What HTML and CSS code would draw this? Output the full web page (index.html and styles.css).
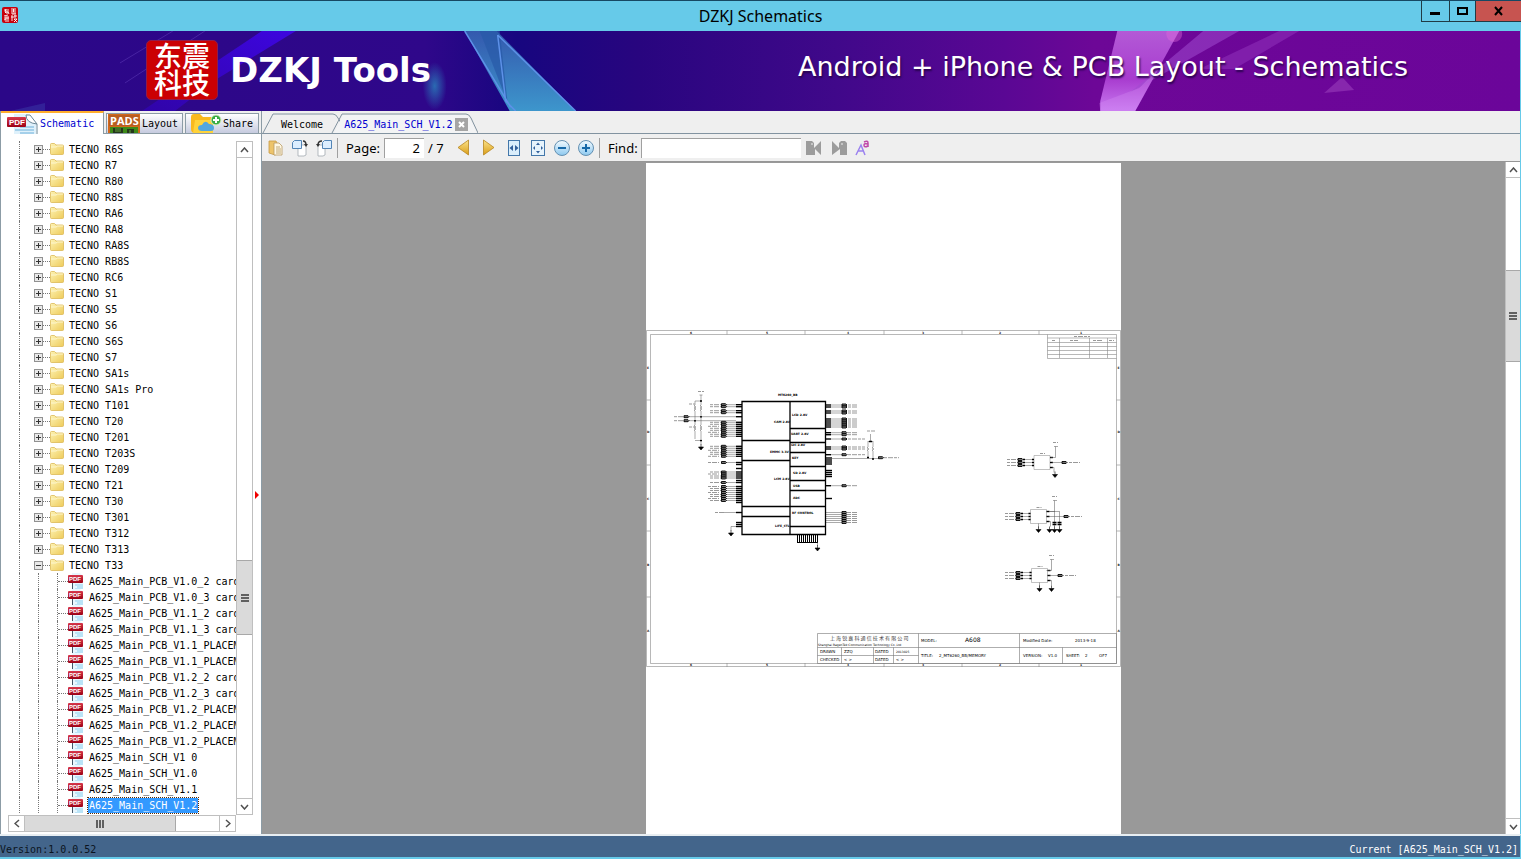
FILE: index.html
```html
<!DOCTYPE html>
<html lang="en">
<head>
<meta charset="utf-8">
<title>DZKJ Schematics</title>
<link rel="stylesheet" href="styles.css">
</head>
<body>
<svg class="defs" aria-hidden="true">
  <defs>
    <linearGradient id="gFolder" x1="0" y1="0" x2="1" y2="1"><stop offset="0" stop-color="#fdf3b4"/><stop offset="1" stop-color="#eecb5a"/></linearGradient>
    <linearGradient id="gRed" x1="0" y1="0" x2="0" y2="1"><stop offset="0" stop-color="#d8384c"/><stop offset="1" stop-color="#9c0014"/></linearGradient>
    <linearGradient id="gGold" x1="0" y1="0" x2="0" y2="1"><stop offset="0" stop-color="#fbe38a"/><stop offset="1" stop-color="#d99d17"/></linearGradient>
    <linearGradient id="gSky" x1="0" y1="0" x2="0" y2="1"><stop offset="0" stop-color="#f4fbff"/><stop offset="1" stop-color="#8cc8ef"/></linearGradient>
    <symbol id="folder" viewBox="0 0 14 13"><path d="M.5 1.500q0-1 1-1h3l1.500 1.500h6.500q1 0 1 1v7.500q0 1-1 1h-11q-1 0-1-1z" fill="url(#gFolder)" stroke="#dcb957" stroke-width=".8"/><path d="M1 4h5l1.500-1H13" fill="none" stroke="#fffbe0" stroke-width=".8"/></symbol>
    <symbol id="pdf" viewBox="0 0 16 16"><path d="M4 0h8l3 3v13H4z" fill="#e8f6fd"/><path d="M4.500 9v7" stroke="#456"/><path d="M7 12h8M9 14h6M7 16h8" stroke="#8cd0f0" fill="none"/><rect x="0" y="2" width="15" height="8" rx="1" fill="url(#gRed)"/><text x="1" y="8" class="pdf-text">PDF</text></symbol>
  </defs>
</svg>

<header class="titlebar">
  <svg class="app-icon" viewBox="0 0 16 16"><rect width="16" height="16" rx="2" fill="#c8000c"/><path d="M2 3h5M4 2L3 5h4M5 4v3M3 6l1-1M6 5l1 2M9 2h5M9 4h5M11.500 2v3M9 6h5M10 7h4M2 9l4-1M4 9v6M2 11h5M2 13l2-1M6 9v6M9 10h3M10 8v6M12 9h3M13 8v3M12 12h3l-3 3M12 12l3 3" stroke="#fff" stroke-width=".9" fill="none"/></svg>
  <h1 class="title">DZKJ Schematics</h1>
  <div class="win-buttons">
    <button class="win-btn" aria-label="Minimize"><svg width="27" height="20"><path d="M8 12.500h10" stroke="#000" stroke-width="3"/></svg></button>
    <button class="win-btn win-max" aria-label="Maximize"><svg width="25" height="20"><rect x="8" y="7" width="9" height="6" fill="none" stroke="#000" stroke-width="2"/></svg></button>
    <button class="win-btn win-close" aria-label="Close"><svg width="45" height="20"><path d="M19 6l7 8M26 6l-7 8" stroke="#000" stroke-width="2"/></svg></button>
  </div>
</header>

<div class="banner">
  <svg class="banner-art" viewBox="0 0 1521 80" preserveAspectRatio="none" aria-hidden="true">
    <defs>
      <linearGradient id="b0"><stop offset="0" stop-color="#2b0788"/><stop offset=".28" stop-color="#2f078a"/><stop offset=".34" stop-color="#17067f"/><stop offset=".42" stop-color="#28057f"/><stop offset=".55" stop-color="#40088a"/><stop offset=".66" stop-color="#5a0794"/><stop offset=".72" stop-color="#6d0797"/><stop offset="1" stop-color="#6b059a"/></linearGradient>
      <linearGradient id="b1" x1="0" y1="0" x2="0" y2="1"><stop offset="0" stop-color="#3459ae"/><stop offset="1" stop-color="#3d96cc"/></linearGradient>
      <linearGradient id="b2" x1="0" y1="1" x2="1" y2="0"><stop offset="0" stop-color="#3004a8"/><stop offset="1" stop-color="#3d06df"/></linearGradient>
      <linearGradient id="b3" x1="0" y1="0" x2="0" y2="1"><stop offset="0" stop-color="#b35ad6"/><stop offset=".6" stop-color="#a83ccf"/><stop offset="1" stop-color="#c878f0"/></linearGradient>
      <radialGradient id="b4"><stop offset="0" stop-color="#2a83bd" stop-opacity=".8"/><stop offset="1" stop-color="#2a83bd" stop-opacity="0"/></radialGradient>
    </defs>
    <rect width="1521" height="80" fill="url(#b0)"/>
    <path d="M262 0h34L217 48 175 80H142z" fill="url(#b2)"/>
    <path d="M205 0L125 52M173 0L120 32" stroke="#5430ae" stroke-width="1" opacity=".7"/>
    <path d="M10 80l35-8 0 8z" fill="#3a3aa8" opacity=".5"/>
    <ellipse cx="435" cy="55" rx="12" ry="24" fill="url(#b4)"/>
    <path d="M465 0h32l79 80h-66z" fill="url(#b1)"/>
    <path d="M480 0h20l8 72z" fill="#285aa8" opacity=".7"/>
    <path d="M465 0l46 76M498 4l78 76M498 4l8 66 10 10" stroke="#5d91e8" stroke-width="1.500" fill="none"/>
    <path d="M1118 0h62l-44 80h-35v-10z" fill="url(#b3)"/>
    <path d="M1204 0h36l-110 62z" fill="#a04bd0" opacity=".55"/>
    <path d="M1280 0h20l-65 38h-35z" fill="#9336bd" opacity=".5"/>
    <path d="M1100 72l40-15 20-20-24 43h-35z" fill="#d792f4" opacity=".3"/>
    <path d="M1325 62l18-16 12 13z" fill="#8727ad"/>
    <circle cx="1175" cy="3" r="8" fill="#e06bda" opacity=".4"/>
  </svg>
  <div class="logo">东震<br>科技</div>
  <strong class="brand">DZKJ Tools</strong>
  <span class="slogan">Android + iPhone &amp; PCB Layout - Schematics</span>
</div>

<main class="main">
  <aside class="side">
    <div class="side-tabs" role="tablist">
      <button class="side-tab active" role="tab"><svg width="34" height="20" viewBox="0 0 34 20"><path d="M8 0h14l8 8v12H8z" fill="#dff1fb"/><path d="M20 1q0 8 11 9L24 1z" fill="#fff" stroke="#6a8796"/><path d="M31 10v10" stroke="#6a8796"/><path d="M14 13h14M9 16h19M14 19h14" stroke="#a5d0ea" stroke-width="2"/><rect x="1" y="3" width="19" height="10" rx="1" fill="url(#gRed)"/><text x="3" y="11" class="tab-pdf-text">PDF</text></svg>Schematic</button>
      <button class="side-tab tab-layout" role="tab"><svg width="32" height="19" viewBox="0 0 32 19"><rect width="32" height="19" fill="#d2691b"/><rect x="1" y="1" width="30" height="11" fill="#b95d20"/><path d="M2 13h28v6H2z" fill="#3d8a18"/><path d="M5 14h10v5H5zM19 15h7v4h-7z" fill="#24371b"/><path d="M7 15h6M7 17h6M22 16v3" stroke="#63a33a"/><text x="2" y="11" class="pads-text">PADS</text></svg>Layout</button>
      <button class="side-tab tab-share" role="tab"><svg width="34" height="19" viewBox="0 0 34 19"><path d="M2 3q0-3 3-3h6l3 3h9v16H6q-4 0-4-4z" fill="#f8b91e"/><path d="M6 6h18v13H4z" fill="#ffd33a"/><path d="M13 17q-4 0-4-3t4-3q3-6 7-1 5 0 5 4 0 3-3 3z" fill="#52a7df"/><circle cx="27" cy="6" r="5" fill="#38ac43" stroke="#d7eec4"/><path d="M24 6h6M27 3v6" stroke="#fff" stroke-width="2"/></svg>Share</button>
    </div>
    <div class="side-body">
      <div class="tree-row">
        <div class="tree" id="tree" role="tree"></div>
        <div class="vscroll">
          <button aria-label="Scroll up"><svg width="9" height="6"><path d="M1 5l3.500-4L8 5" class="arrow"/></svg></button>
          <div class="track"><div class="space-tree"></div><div class="thumb thumb-tree"><i></i><i></i><i></i></div></div>
          <button aria-label="Scroll down"><svg width="9" height="6"><path d="M1 1l3.500 4L8 1" class="arrow"/></svg></button>
        </div>
      </div>
      <div class="hscroll">
        <button aria-label="Scroll left"><svg width="6" height="9"><path d="M5 1L1 4.500 5 8" class="arrow"/></svg></button>
        <div class="hthumb"><i></i><i></i><i></i></div><div class="hspace"></div>
        <button aria-label="Scroll right"><svg width="6" height="9"><path d="M1 1l4 3.500L1 8" class="arrow"/></svg></button>
      </div>
    </div>
    <svg class="splitter" width="5" height="10"><path d="M0 1l4 4-4 4z" fill="#f00000"/></svg>
  </aside>

  <section class="viewer">
    <div class="doc-tabs" role="tablist">
      <svg class="tab-shape" width="216" height="23" aria-hidden="true"><path d="M1 22L11 3h60q3 0 5 4l3 5M70 22L80 3h124q3 0 5 4l7 15" fill="none" stroke="#8293a0"/><path d="M72 22L81 4h123q2 0 4 4l7 14z" fill="#f3f4f5"/></svg>
      <button class="doc-tab welcome" role="tab">Welcome</button>
      <button class="doc-tab current" role="tab">A625_Main_SCH_V1.2</button>
      <button class="tab-close" aria-label="Close tab"><svg width="13" height="13"><path d="M4 4l5 5M9 4L4 9" stroke="#fff" stroke-width="2"/></svg></button>
    </div>
    <div class="toolbar">
      <button class="tool" aria-label="Contents"><svg width="16" height="16"><path d="M1 1h7l1 2v11l-2 1-6-2z" fill="#edc46b" stroke="#c79a45" stroke-width=".8"/><path d="M6 3h5l3 3v9H6z" fill="#fff8e4" stroke="#b99a62" stroke-width=".8"/><path d="M8 7h4M8 9h5M8 11h5M8 13h5" stroke="#b09560" stroke-width=".8"/></svg></button>
      <button class="tool" aria-label="Rotate right"><svg width="18" height="18"><path d="M8 6h7v10l-2 1H7V8z" fill="#fff" stroke="#a2a9b0" stroke-width=".8"/><path d="M1.500 3.500l2-2h7v8h-9z" fill="#dceeff" stroke="#5385b6"/><path d="M12 2q3 0 3 4" fill="none" stroke="#333" stroke-width="1.500"/><path d="M13 5h4l-2 3z" fill="#333"/></svg></button>
      <button class="tool" aria-label="Rotate left"><svg width="18" height="18"><path d="M3 6h7v10l-2 1H3z" fill="#fff" stroke="#a2a9b0" stroke-width=".8"/><path d="M7.500 3.500l2-2h7v8h-9z" fill="#dceeff" stroke="#5385b6"/><path d="M7 2Q3 2 3 6" fill="none" stroke="#333" stroke-width="1.500"/><path d="M1 5h4L3 8z" fill="#333"/></svg></button>
      <span class="sep"></span>
      <label class="page-label" for="page">Page:</label>
      <input class="page-input" id="page" value="2">
      <span class="page-total">/ 7</span>
      <button class="tool wide" aria-label="Previous page"><svg width="12" height="17"><path d="M11.500 1v15L1 8.500z" fill="url(#gGold)" stroke="#b78620" stroke-width=".8"/></svg></button>
      <button class="tool wide" aria-label="Next page"><svg width="12" height="17"><path d="M.5 1v15L11 8.500z" fill="url(#gGold)" stroke="#b78620" stroke-width=".8"/></svg></button>
      <button class="tool" aria-label="Fit width"><svg width="14" height="16"><rect x="1.500" y=".5" width="11" height="15" fill="#d9edfb" stroke="#4377aa"/><path d="M6 5v6L2.500 8zM8 5v6l3.500-3z" fill="#315f9a"/></svg></button>
      <button class="tool" aria-label="Fit page"><svg width="16" height="16"><rect x="1.500" y=".5" width="13" height="15" fill="#e6f3fc" stroke="#4377aa"/><path d="M8 2.500l2 2.500H6zM8 13.500L6 11h4zM3 8l2-2v4zM13 8l-2-2v4z" fill="#315f9a"/></svg></button>
      <button class="tool" aria-label="Zoom out"><svg width="18" height="18"><circle cx="9" cy="9" r="7.500" fill="url(#gSky)" stroke="#6591b2"/><path d="M5 9h8" stroke="#1769a8" stroke-width="2"/></svg></button>
      <button class="tool" aria-label="Zoom in"><svg width="18" height="18"><circle cx="9" cy="9" r="7.500" fill="url(#gSky)" stroke="#6591b2"/><path d="M5 9h8M9 5v8" stroke="#1769a8" stroke-width="2"/></svg></button>
      <span class="sep"></span>
      <label class="find-label" for="find">Find:</label>
      <input class="find-input" id="find">
      <button class="tool wide" aria-label="Find previous"><svg width="16" height="16"><path d="M0 1h6l2 2v5l7-7v14l-6-6v6H0z" fill="#9c9c9c"/><path d="M5 4h2" stroke="#eee"/></svg></button>
      <button class="tool" aria-label="Find next"><svg width="16" height="16"><path d="M1 1l7 7V3l2-2h4l2 2v12H9V9l-8 6z" fill="#9c9c9c"/><path d="M10 4h2" stroke="#eee"/></svg></button>
      <button class="tool" aria-label="Match case"><svg width="16" height="16"><path d="M1 15L6 5l4 10M3 11h6" fill="none" stroke="#9b82ef" stroke-width="1.500"/><path d="M9 2q4-2 4 1v4M13 4q-4-1-4 1 0 3 4 1" fill="none" stroke="#c047a9" stroke-width="1.500"/></svg></button>
    </div>
    <div class="canvas">
      <div class="stage">
        <div class="sheet">
          <svg class="schematic" id="schematic" viewBox="0 0 475 337" role="img" aria-label="Schematic sheet 2">
            <g id="drawing"></g>
            <g class="chip">
              <path d="M96 71.500h83.500v133H96zM144 71.500v133M96 110.500h48M96 130.500h48M96 176.500h83.500M96 186.500h48M144 98.500h35.500M144 112.500h35.500M144 122.500h35.500M144 136.500h35.500M144 150.500h35.500M144 160.500h35.500M144 196.500h35.500"/>
            </g>
            <g class="tiny">
              <text x="132" y="66">MT6260_BB</text><text x="128" y="93">CAM 2.8V</text><text x="124" y="123">EMMC 3.3V</text><text x="128" y="150">LCM 2.8V</text><text x="129" y="197">LIFE_CTL</text>
              <text x="146" y="86">LCD 2.8V</text><text x="145" y="105">UART 2.8V</text><text x="145" y="116">I2C 2.8V</text><text x="146" y="129">KEY</text><text x="147" y="144">SD 2.8V</text><text x="147" y="157">USB</text><text x="147" y="169">ADC</text><text x="146" y="184">RF CONTROL</text>
            </g>
            <g class="title-block">
              <path d="M171.500 303.500h299v30h-299zM171.500 317.500h101M272.500 303.500v30M373.500 303.500v30M171.500 325.500h101M195.500 317.500v16M227.500 317.500v16M247.500 317.500v16M272.500 317.500h198M416.500 317.500v16"/>
              <text class="cn" x="184" y="310">上 海 锐 嘉 科 通 信 技 术 有 限 公 司</text>
              <text class="co" x="172" y="316">Shanghai RagenTek Communication Technology Co.,Ltd</text>
              <text x="174" y="323">DRAWN</text><text x="198" y="323">ZZQ</text><text x="229" y="323">DATED</text><text x="250" y="323" class="co">2013025</text>
              <text x="174" y="331">CHECKED</text><text x="198" y="331">&lt; &gt;</text><text x="229" y="331">DATED</text><text x="250" y="331">&lt; &gt;</text>
              <text x="275" y="312">MODEL:</text><text x="319" y="312" class="model">A608</text><text x="275" y="327">TITLE:</text><text x="293" y="327">2_MT6260_BB/MEMORY</text>
              <text x="377" y="312">Modified Date:</text><text x="429" y="312">2013-9-18</text><text x="377" y="327">VERSION:</text><text x="402" y="327">V1.0</text><text x="420" y="327">SHEET:</text><text x="439" y="327">2</text><text x="453" y="327">OF7</text>
            </g>
          </svg>
        </div>
      </div>
      <div class="vscroll view-scroll">
        <button aria-label="Scroll page up"><svg width="9" height="6"><path d="M1 5l3.500-4L8 5" class="arrow"/></svg></button>
        <div class="track"><div class="space-view"></div><div class="thumb thumb-view"><i></i><i></i><i></i></div></div>
        <button aria-label="Scroll page down"><svg width="9" height="6"><path d="M1 1l3.500 4L8 1" class="arrow"/></svg></button>
      </div>
    </div>
  </section>
</main>

<footer class="status"><span class="version">Version:1.0.0.52</span><span>Current [A625_Main_SCH_V1.2]</span></footer>
<script src="app.js"></script>
</body>
</html>
```
FILE: styles.css
```css
* { box-sizing: border-box; }
body {
  margin: 0; height: 100vh; display: flex; flex-direction: column; overflow: hidden;
  background: #efefef; color: #000;
  font-family: "DejaVu Sans Mono", "Liberation Mono", monospace; font-size: 10px;
}
button { border: 0; padding: 0; margin: 0; background: none; font: inherit; color: inherit; display: flex; align-items: center; justify-content: center; }
svg { display: block; flex: none; }
.defs { position: absolute; width: 0; height: 0; }
.arrow { fill: none; stroke: #505050; stroke-width: 1.5; }
.pdf-text { font: bold 6px "Liberation Sans", sans-serif; fill: #fff; }
.tab-pdf-text { font: bold 8px "Liberation Sans", sans-serif; fill: #fff; }
.pads-text { font: bold 11px "Open Sans", sans-serif; fill: #fff; }

.titlebar { position: relative; flex: none; height: 31px; display: flex; align-items: center; justify-content: center; background: #66cae9; border-top: 1px solid #164863; }
.app-icon { position: absolute; left: 2px; top: 6px; width: 16px; height: 16px; }
.title { margin: 0; font: 16px/20px "Noto Sans", sans-serif; padding-bottom: 1px; }
.win-buttons { position: absolute; right: 0; top: 0; display: flex; border: 1px solid #203b45; border-top: 0; border-right: 0; }
.win-max { border-left: 1px solid #203b45; border-right: 1px solid #203b45; }
.win-close { background: #c75450; }

.banner { position: relative; flex: none; height: 80px; display: flex; align-items: center; padding: 0 112px 2px 146px; overflow: hidden; border-right: 1px solid #66cae9; }
.banner-art { position: absolute; left: 0; top: 0; width: 100%; height: 100%; }
.logo { position: relative; width: 72px; height: 60px; padding-top: 1px; border-radius: 5px; background: #cb0003; border: 1px solid #8e1c4c; color: #fff; text-align: center; font: 500 28px/27px "Noto Sans CJK SC", sans-serif; }
.brand { position: relative; margin-left: 12px; color: #fff; font: bold 34px/44px "DejaVu Sans", sans-serif; white-space: nowrap; }
.slogan { position: relative; margin-left: auto; padding-bottom: 6px; color: #fff; font: 27px/36px "DejaVu Sans", sans-serif; text-shadow: 1px 2px 2px #28044e; white-space: nowrap; }

.main { flex: 1; min-height: 0; display: flex; border-right: 1px solid #66cae9; }
.side { position: relative; flex: none; width: 262px; display: flex; flex-direction: column; border-left: 1px solid #8c9ca6; border-right: 1px solid #8c9ca6; }
.side-tabs { flex: none; height: 23px; display: flex; align-items: flex-end; gap: 2px; border-bottom: 1px solid #8c9ca6; }
.side-tab { height: 20px; border: 1px solid #8c9ca6; border-bottom: 0; background: linear-gradient(#fff, #c6cbdf); justify-content: flex-start; overflow: hidden; }
.side-tab.active { width: 103px; height: 23px; margin-bottom: -1px; padding-left: 5px; border: 0; border-top: 2px solid #ffad2c; border-right: 1px solid #8c9ca6; background: #fff; color: #0000d0; }
.tab-layout { width: 77px; padding-left: 1px; gap: 2px; }
.tab-share { width: 74px; padding-left: 3px; }
.side-body { flex: 1; min-height: 0; display: flex; flex-direction: column; padding: 7px 8px 2px 7px; background: #fff; }
.tree-row { flex: 1; min-height: 0; display: flex; }
.tree { flex: 1; min-width: 0; overflow: hidden; padding-left: 11px; }
.item { height: 16px; display: flex; align-items: center; white-space: nowrap; padding-left: 14px; border-left: 1px dotted #777; }
.toggle { width: 9px; height: 9px; border: 1px solid #919191; background: #e9e9e9; position: relative; flex: none; }
.toggle::before { content: ""; position: absolute; left: 1px; right: 1px; top: 3px; height: 1px; background: #333; }
.toggle.plus::after { content: ""; position: absolute; top: 1px; bottom: 1px; left: 3px; width: 1px; background: #333; }
.gap { flex: none; width: 7px; height: 1px; border-top: 1px dotted #777; }
.folder-icon { width: 14px; height: 13px; }
.label { padding: 1px 1px 0; margin-left: 4px; line-height: 14px; }
.trunk { flex: none; width: 19px; margin-left: 4px; align-self: stretch; border-left: 1px dotted #777; }
.leaf { flex: none; align-self: stretch; width: 11px; border-left: 1px dotted #777; display: flex; align-items: center; }
.leaf::after { content: ""; flex: 1; border-top: 1px dotted #777; }
.pdf-icon { width: 16px; height: 16px; }
.leaf-label { margin-left: 4px; }
.selected { background: #3399ff; color: #fff; outline: 1px dotted #5b2a00; }

.vscroll { flex: none; width: 17px; display: flex; flex-direction: column; border: 1px solid #bfbfbf; background: #fff; }
.vscroll button { height: 16px; border-bottom: 1px solid #bfbfbf; flex: none; }
.vscroll button:last-child { border-bottom: 0; border-top: 1px solid #bfbfbf; }
.track { flex: 1; display: flex; flex-direction: column; min-height: 0; }
.space-tree { flex: 403 1 0; }
.thumb { display: flex; flex-direction: column; align-items: center; justify-content: center; gap: 1px; background: #dadada; border: solid #a8a8a8; border-width: 1px 0; }
.thumb i { width: 8px; height: 2px; background: #606060; }
.thumb-tree { flex: 73 1 0; }
.track::after { content: ""; flex: 163 1 0; }
.hscroll { flex: none; height: 17px; width: 228px; display: flex; border: 1px solid #bfbfbf; }
.hscroll button { width: 16px; border-right: 1px solid #bfbfbf; }
.hscroll button:last-child { border-right: 0; border-left: 1px solid #bfbfbf; }
.hthumb { flex: 151 1 0; display: flex; align-items: center; justify-content: center; gap: 1px; background: #dadada; border-right: 1px solid #a8a8a8; }
.hthumb i { width: 2px; height: 8px; background: #606060; }
.hspace { flex: 43 1 0; }
.splitter { position: absolute; right: 1px; top: 379px; }

.viewer { flex: 1; min-width: 0; display: flex; flex-direction: column; }
.doc-tabs { position: relative; flex: none; height: 23px; display: flex; align-items: center; padding: 4px 0 0 19px; border-bottom: 1px solid #8293a0; }
.tab-shape { position: absolute; left: 0; top: 0; }
.doc-tab { position: relative; }
.current { margin-left: 21px; color: #0000d0; }
.tab-close { position: relative; width: 13px; height: 13px; margin-left: 2px; background: #a5a5a5; }
.toolbar { flex: none; height: 28px; display: flex; align-items: center; padding: 0 2px; border-bottom: 1px solid #969696; font: 13px/20px "Noto Sans", sans-serif; }
.tool { width: 24px; height: 24px; flex: none; }
.tool.wide { width: 26px; }
.sep { width: 1px; height: 20px; margin: 0 8px 0 1px; background: #a0a0a0; }
.page-label { width: 38px; }
.page-input, .find-input { height: 20px; border: 0; border-top: 1px solid #a0a0a0; border-left: 1px solid #a0a0a0; background: #fff; font: inherit; }
.page-input { width: 40px; padding: 0 4px; text-align: right; }
.page-total { width: 26px; padding-left: 4px; }
.find-label { width: 33px; }
.find-input { width: 160px; }
.canvas { flex: 1; min-height: 0; display: flex; background: #999; }
.stage { flex: 1; display: flex; justify-content: center; padding-top: 1px; }
.sheet { width: 475px; background: #fff; display: flex; align-items: center; }
.schematic { width: 100%; }
.view-scroll { width: 15px; border-width: 0 0 0 1px; }
.space-view { flex: 93 1 0; }
.thumb-view { flex: 90 1 0; }
.view-scroll .track::after { flex: 459 1 0; }

.frame, .wire, .label-line { fill: none; }
.frame { stroke: #888; stroke-width: .6; }
.wire { stroke: #555; stroke-width: .5; }
.pin { fill: none; stroke: #000; stroke-width: 1.4; }
.pin-down { fill: none; stroke: #000; stroke-width: 1; }
.port { fill: #777; stroke: #000; stroke-width: .9; }
.label-line { stroke: #999; stroke-width: 1; stroke-dasharray: 3 1 5 1; }
.chip path { fill: none; stroke: #000; stroke-width: 1.3; }
.box { fill: #fff; stroke: #999; stroke-width: .6; }
.gnd { fill: #000; stroke: #000; stroke-width: .6; }
.axis { font: bold 3px "DejaVu Sans", sans-serif; fill: #222; }
.tiny text { font: bold 3px "DejaVu Sans", sans-serif; fill: #000; }
.title-block path { fill: none; stroke: #777; stroke-width: .6; }
.title-block text { font: 4px "DejaVu Sans", sans-serif; fill: #000; }
.title-block .cn { font: 5px "Noto Sans CJK SC", sans-serif; fill: #444; }
.title-block .co { font-size: 3px; }
.title-block .model { font-size: 6px; }

.status { flex: none; height: 25px; display: flex; justify-content: space-between; align-items: flex-end; padding: 0 2px 0 0; line-height: 14px; background: #43658b; border-top: 2px solid #e8eef2; border-bottom: 2px solid #66cae9; border-right: 1px solid #66cae9; color: #fff; }
.version { color: #0b1420; }
```
FILE: app.js
```js
const folders = ['R6S', 'R7', 'R80', 'R8S', 'RA6', 'RA8', 'RA8S', 'RB8S', 'RC6', 'S1', 'S5', 'S6', 'S6S', 'S7', 'SA1s', 'SA1s Pro', 'T101', 'T20', 'T201', 'T203S', 'T209', 'T21', 'T30', 'T301', 'T312', 'T313', 'T33'];
const files = ['PCB_V1.0_2 card', 'PCB_V1.0_3 card', 'PCB_V1.1_2 card', 'PCB_V1.1_3 card', 'PCB_V1.1_PLACEMENT', 'PCB_V1.1_PLACEMENT', 'PCB_V1.2_2 card', 'PCB_V1.2_3 card', 'PCB_V1.2_PLACEMENT', 'PCB_V1.2_PLACEMENT', 'PCB_V1.2_PLACEMENT', 'SCH_V1 0', 'SCH_V1.0', 'SCH_V1.1', 'SCH_V1.2'];

document.getElementById('tree').innerHTML =
  folders.map(name => `<div class="item" role="treeitem"><span class="toggle ${name === 'T33' ? '' : 'plus'}"></span><span class="gap"></span><svg class="folder-icon"><use href="#folder"/></svg><span class="label">TECNO ${name}</span></div>`).join('') +
  files.map((name, i) => `<div class="item" role="treeitem"><span class="trunk"></span><span class="leaf"></span><svg class="pdf-icon"><use href="#pdf"/></svg><span class="label leaf-label ${i === files.length - 1 ? 'selected' : ''}">A625_Main_${name}</span></div>`).join('');

let out = '';
const path = (cls, d) => { out += `<path class="${cls}" d="${d}"/>`; };
const port = (x, y) => path('port', `M${x} ${y - 1}h4l1 1-1 1h-4z`);
const gnd = (x, y) => path('gnd', `M${x} ${y - 3}v3M${x - 2.5} ${y}h5l-2.500 3z`);
const ys = (from, step, n) => Array.from({ length: n }, (_, i) => from + step * i);

// Sheet frame with its zone marks
path('frame', 'M.5 .5h474v336H.5zM4.500 4.500h466v329h-466z');
[81, 159, 238, 316, 393].forEach(x => path('frame', `M${x} .5v4M${x} 333v4`));
[70, 135, 201, 267].forEach(y => path('frame', `M.5 ${y}h4M470.5 ${y}h4`));
[44, 120, 201, 276, 353, 434].forEach((x, i) => [3.5, 336].forEach(y => { out += `<text class="axis" x="${x}" y="${y}">${6 - i}</text>`; }));
[39, 103, 170, 236, 302].forEach((y, i) => [1, 471.5].forEach(x => { out += `<text class="axis" x="${x}" y="${y}">${'EDCBA'[i]}</text>`; }));

// Revision table
path('frame', 'M401.500 4.500v24h69M401.500 8h69M401.500 12.500h69M401.500 16.500h69M401.500 20.500h69M401.500 24.500h69M413.500 8v20M443.500 8v20M461.500 8v20');
path('label-line', 'M428 6.500h16M406 10.500h4M424 10.500h8M447 10.500h10M463 10.500h5');

// Chip, left side
const leftPorts = [...ys(74.7, 2, 2), ...ys(80.7, 2, 2), ...ys(92.3, 2, 8), ...ys(116.3, 2, 6), 132.5, ...ys(142, 2, 4), 152.5, ...ys(156.5, 2, 8)];
leftPorts.forEach(y => {
  path('label-line', `M${y % 3 < 1 ? 62 : 64} ${y}h11`);
  path('wire', `M80 ${y}h10`); port(75.5, y); path('pin', `M90 ${y}h6`);
});
[86.7, 134.5, 138.5, 150.5, 172.5, 182.5, 192.5, 194.5, 196.5].forEach(y => path('pin', `M90 ${y}h6`));
path('wire', 'M78 182.500h12M90 196.500h-5v4'); path('label-line', 'M69 182.500h9'); gnd(85, 203);

// Chip, right side
const rightPorts = [...ys(75, 2, 2), ...ys(81, 2, 2), ...ys(89, 2, 5), ...ys(102.7, 2, 2), 109, ...ys(117, 2, 2), 124.7, 155.7, ...ys(182.5, 2, 6)];
rightPorts.forEach(y => {
  path(y > 180 ? 'wire' : 'pin', `M180 ${y}h5`); path('wire', `M185 ${y}h11`);
  port(196, y); path('label-line', `M202 ${y}h${y > 108 && y < 126 ? 17 : 10}`);
});
[...ys(128, 2, 4), ...ys(140.5, 2, 4), 168.5].forEach(y => path('pin', `M180 ${y}h6`));
ys(151.5, 2, 11).forEach(x => path('pin-down', `M${x} 205v7.500`));
path('pin-down', 'M151 212.500h21'); path('wire', 'M171.500 212.500v3'); gnd(171.5, 218);

// Pull-up networks
[49, 55].forEach(x => {
  path('wire', `M${x} 71v4l-1 1 2 1-2 1 2 1-2 1 1 1v14l-1 1 2 1-2 1 2 1-2 1 1 1v8`);
  path('pin', `M${x - 1} ${x > 50 ? 86.7 : 90.7}h2`);
});
path('wire', 'M49 71h6v-6M53.500 65h3M49 110.500h6v4M43 86.700h47M43 90.700h47');
path('pin', 'M54 71h2M54 110.500h2');
path('label-line', 'M52 61.500h6M28 86.700h10M28 90.700h10M43 74h6M43 97h6');
port(38, 86.7); port(38, 90.7); gnd(55, 117);
path('wire', 'M185 128.500h48M224.500 104v7M222 111.500h5M222 111v6l-1 1 2 1-2 1 1 1v7M227 111v6l-1 1 2 1-2 1 1 1v8');
path('label-line', 'M221 101h8M238 127.700h15'); path('pin', 'M223 111.500h3M221 127.500h2M226 129h2'); port(232.5, 127.7);

// Three switch circuits
[[388, 125.5, 375, 418, 410], [384.5, 179.5, 373, 420, 409], [385.5, 238.5, 373, 414, 406]].forEach(([x, y, px, rx, vx], i) => {
  path('box', `M${x} ${y}h16v14h-16z`);
  path('label-line', `M${x + 6} ${y - 2}h5M${vx - 3} ${y - 13}h5`);
  ys(y + 4, 3, 3).forEach(py => {
    path('label-line', `M${px - 14} ${py}h12`); port(px - 3, py); path('wire', `M${px + 2} ${py}H${x}`); path('pin', `M${x - 2} ${py}h2M${px + 2} ${py}h2`);
  });
  [2, 7, 12].forEach(d => path('pin', `M${x + 16} ${y + d}h3`));
  path('wire', `M${vx - 2} ${y - 9}h4M${vx - .5} ${y - 9}v11h-5M${x + 18} ${y + 7}H${rx}M${x + 18} ${y + 12}h2v5`);
  port(rx - 2, y + 7); path('label-line', `M${rx + 5} ${y + 7}h11`);
  gnd(i === 1 ? 403.5 : x + (i ? 20 : 21), y + 20 - (i ? 0 : 1));
  if (i) { path('wire', `M${x + 8} ${y + 14}v4`); gnd(x + 8, y + 20); }
  if (i === 1) {
    path('wire', 'M408.500 181v16M413.500 181v16M403 181.500h10');
    path('pin', 'M406.500 192.500h4M406.500 194.500h4M411.500 192.500h4M411.500 194.500h4');
    gnd(408.5, 199.5); gnd(413.5, 199.5);
  }
});
document.getElementById('drawing').innerHTML = out;
```
